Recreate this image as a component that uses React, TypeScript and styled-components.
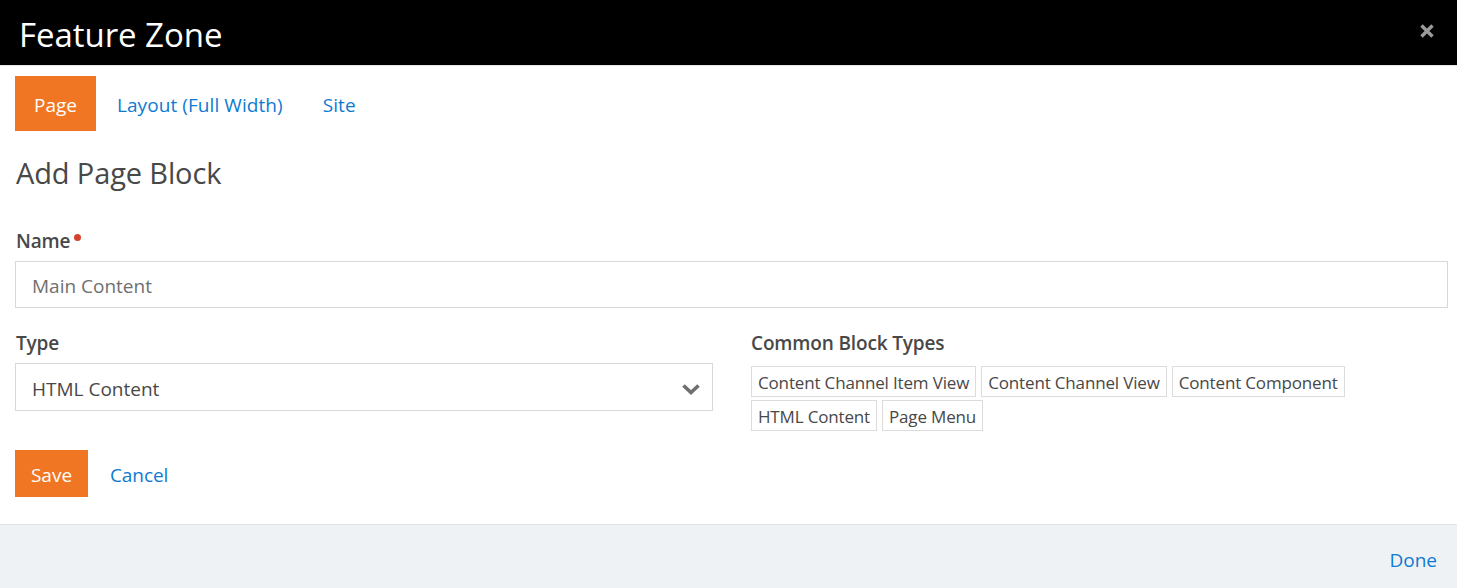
import React from "react";
import styled, { createGlobalStyle } from "styled-components";

const Global = createGlobalStyle`
  html, body { margin: 0; padding: 0; height: 100%; background: #fff; }
  body { font-family: "Open Sans", "Noto Sans", sans-serif; font-size: 19px; color: #484848; }
  * { box-sizing: border-box; }
`;

const Modal = styled.div`
  width: 1457px;
  height: 588px;
  display: flex;
  flex-direction: column;
  overflow: hidden;
`;

const Header = styled.header`
  height: 66px;
  flex: none;
  background: #000;
  border-bottom: 1px solid #e5e5e5;
  display: flex;
  align-items: center;
  justify-content: space-between;
  padding: 0 23px 0 19px;
`;

const Title = styled.h1`
  margin: 4px 0 0;
  font-size: 33px;
  font-weight: 400;
  letter-spacing: -0.05px;
  color: #fff;
`;

const Close = styled.button`
  border: 0;
  padding: 0;
  background: none;
  display: flex;
  margin-top: -4px;
`;

const Body = styled.main`
  flex: 1;
  padding: 10px 9px 0 15px;
  display: flex;
  flex-direction: column;
`;

const Tabs = styled.nav`
  display: flex;
  height: 55px;
  gap: 2px;
`;

const Tab = styled.a<{ $active?: boolean }>`
  display: flex;
  align-items: center;
  padding: 2px 19px 0;
  font-size: 19px;
  letter-spacing: ${(p) => (p.$active ? "0" : "0.07px")};
  color: ${(p) => (p.$active ? "#fff" : "#0e7ad1")};
  background: ${(p) => (p.$active ? "#f07624" : "transparent")};
`;

const Heading = styled.h2`
  margin: 24px 0 0;
  height: 36px;
  line-height: 36px;
  font-size: 29px;
  font-weight: 400;
  letter-spacing: -0.13px;
  padding-left: 1px;
  color: #484848;
`;

const Label = styled.label<{ $inset?: boolean }>`
  display: block;
  height: 24px;
  line-height: 24px;
  font-size: 19px;
  font-weight: 600;
  letter-spacing: -0.15px;
  padding-left: ${(p) => (p.$inset ? "1px" : "0")};
  color: #484848;
`;

const Required = styled.span`
  display: inline-block;
  width: 7px;
  height: 7px;
  margin-left: 4px;
  border-radius: 50%;
  background: #d4442e;
  vertical-align: 7px;
`;

const NameField = styled.div`
  margin-top: 38px;
`;

const TextBox = styled.div`
  margin-top: 8px;
  height: 47px;
  border: 1px solid #d8d8d8;
  padding: 2px 16px 0;
  display: flex;
  align-items: center;
  font-size: 19px;
  color: #6f6f6f;
`;

const Columns = styled.div`
  display: grid;
  grid-template-columns: 698px 697px;
  column-gap: 38px;
  margin-top: 23px;
`;

const SelectBox = styled(TextBox)`
  height: 48px;
  justify-content: space-between;
  padding: 3px 11px 0 16px;
  color: #484848;
`;

const Chips = styled.div`
  margin-top: 11px;
  display: flex;
  flex-wrap: wrap;
  gap: 3px 5px;
`;

const Chip = styled.span`
  display: block;
  height: 31px;
  line-height: 31px;
  padding: 0 6px;
  border: 1px solid #dcdcdc;
  font-size: 17px;
  letter-spacing: -0.16px;
  color: #484848;
`;

const Actions = styled.div`
  display: flex;
  align-items: center;
  margin-top: 19px;
  height: 47px;
  gap: 22px;
`;

const Save = styled.button`
  width: 73px;
  height: 47px;
  border: 0;
  padding: 2px 0 0;
  background: #f07624;
  color: #fff;
  font: inherit;
`;

const TextLink = styled.a`
  font-size: 19px;
  color: #0e7ad1;
`;

const CancelLink = styled(TextLink)`
  margin-top: 2px;
  letter-spacing: -0.1px;
`;

const Footer = styled.footer`
  height: 64px;
  flex: none;
  background: #eff2f5;
  border-top: 1px solid #e0e2e5;
  display: flex;
  align-items: center;
  justify-content: flex-end;
  padding: 6px 20px 0 0;
`;

const chips = [
  "Content Channel Item View",
  "Content Channel View",
  "Content Component",
  "HTML Content",
  "Page Menu",
];

export default function App() {
  return (
    <Modal>
      <Global />
      <Header>
        <Title>Feature Zone</Title>
        <Close aria-label="Close">
          <svg width="14" height="14" viewBox="0 0 14 14">
            <path d="M1.5 1.5 12.5 12.5M12.5 1.5 1.5 12.5" stroke="#9a9a9a" strokeWidth="3.4" />
          </svg>
        </Close>
      </Header>
      <Body>
        <Tabs>
          <Tab $active>Page</Tab>
          <Tab>Layout (Full Width)</Tab>
          <Tab>Site</Tab>
        </Tabs>
        <Heading>Add Page Block</Heading>
        <NameField>
          <Label $inset>
            Name<Required />
          </Label>
          <TextBox>Main Content</TextBox>
        </NameField>
        <Columns>
          <div>
            <Label $inset>Type</Label>
            <SelectBox>
              HTML Content
              <svg width="20" height="12" viewBox="0 0 20 12">
                <path d="M2.5 2.5 10 9.5 17.5 2.5" fill="none" stroke="#6f6f6f" strokeWidth="3.6" />
              </svg>
            </SelectBox>
          </div>
          <div>
            <Label>Common Block Types</Label>
            <Chips>
              {chips.map((c) => (
                <Chip key={c}>{c}</Chip>
              ))}
            </Chips>
          </div>
        </Columns>
        <Actions>
          <Save>Save</Save>
          <CancelLink>Cancel</CancelLink>
        </Actions>
      </Body>
      <Footer>
        <TextLink>Done</TextLink>
      </Footer>
    </Modal>
  );
}
